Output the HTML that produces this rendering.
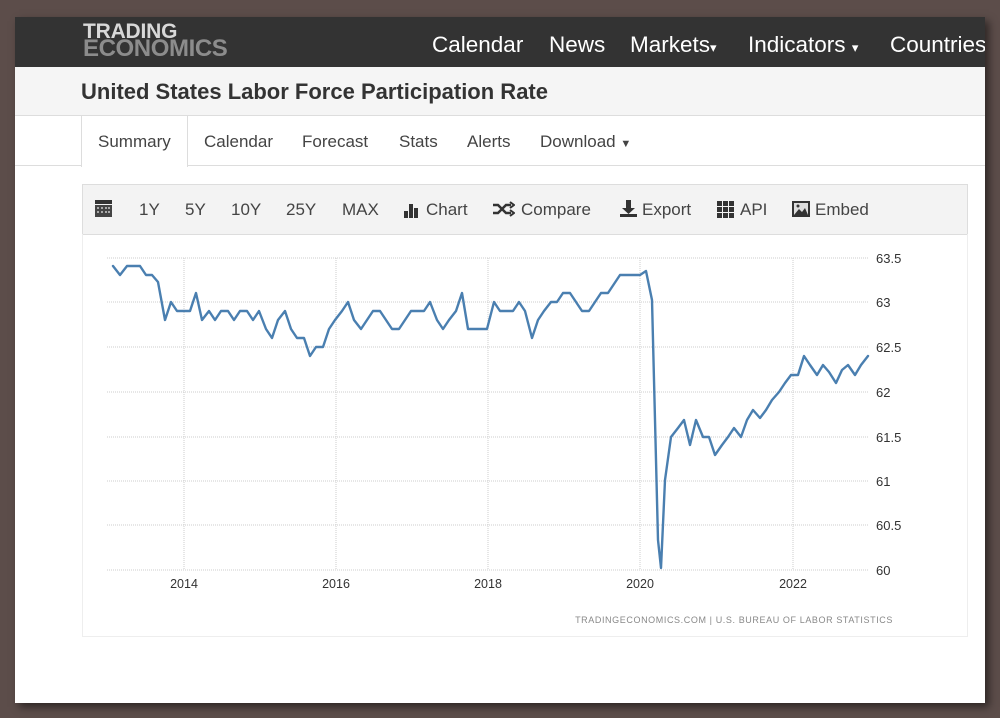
<!DOCTYPE html>
<html><head><meta charset="utf-8"><style>
*{margin:0;padding:0;box-sizing:border-box}
body{width:1000px;height:718px;background:#5c4d4a;position:relative;overflow:hidden;font-family:"Liberation Sans",Arial,sans-serif}
.page{position:absolute;left:15px;top:17px;width:970px;height:686px;background:#fff;overflow:hidden;box-shadow:4px 4px 8px rgba(0,0,0,.5)}
.hdr{position:absolute;left:0;top:0;width:970px;height:50px;background:#333}
.logo{position:absolute;left:68px;top:6px;font-weight:bold;font-size:21px;line-height:17px;letter-spacing:-.2px}
.logo .a{color:#d8d8d8}.logo .b{color:#8c8c8c;font-size:24px;letter-spacing:-.4px}
.nav{position:absolute;top:15px;color:#fff;font-size:22.5px}
.tbar{position:absolute;left:0;top:50px;width:970px;height:49px;background:#f5f5f5;border-bottom:1px solid #ddd}
.tbar h1{position:absolute;left:66px;top:12px;font-size:22px;color:#333;font-weight:bold}
.tabs{position:absolute;left:0;top:99px;width:970px;height:50px;border-bottom:1px solid #ddd}
.tab{position:absolute;top:16px;font-size:17px;color:#444}
.act{position:absolute;left:66px;top:-1px;width:107px;height:52px;background:#fff;border:1px solid #ddd;border-bottom:none}
.tool{position:absolute;left:67px;top:167px;width:886px;height:51px;background:#f3f3f3;border:1px solid #ddd}
.ti{position:absolute;top:15px;font-size:17px;color:#444}
.chart{position:absolute;left:67px;top:217px;width:886px;height:403px;border:1px solid #eee;border-top:none}
</style></head><body>
<div class="page">
<div class="hdr">
<div class="logo"><div class="a">TRADING</div><div class="b">ECONOMICS</div></div>
<div class="nav" style="left:417px">Calendar</div>
<div class="nav" style="left:534px">News</div>
<div class="nav" style="left:615px">Markets<span style="font-size:13px">▾</span></div>
<div class="nav" style="left:733px">Indicators <span style="font-size:13px">▾</span></div>
<div class="nav" style="left:875px">Countries</div>
</div>
<div class="tbar"><h1>United States Labor Force Participation Rate</h1></div>
<div class="tabs">
<div class="act"></div>
<div class="tab" style="left:83px">Summary</div>
<div class="tab" style="left:189px">Calendar</div>
<div class="tab" style="left:287px">Forecast</div>
<div class="tab" style="left:384px">Stats</div>
<div class="tab" style="left:452px">Alerts</div>
<div class="tab" style="left:525px">Download <span style="font-size:11px">▼</span></div>
</div>
<div class="tool">
<svg style="position:absolute;left:12px;top:15px" width="17" height="17"><rect x="0" y="0" width="17" height="4" fill="#333"/><rect x="0" y="5" width="17" height="12" fill="#444"/><g fill="#aaa"><rect x="2" y="7" width="2" height="2"/><rect x="6" y="7" width="2" height="2"/><rect x="10" y="7" width="2" height="2"/><rect x="13" y="7" width="2" height="2"/><rect x="2" y="11" width="2" height="2"/><rect x="6" y="11" width="2" height="2"/><rect x="10" y="11" width="2" height="2"/><rect x="13" y="11" width="2" height="2"/></g></svg>
<div class="ti" style="left:56px">1Y</div>
<div class="ti" style="left:102px">5Y</div>
<div class="ti" style="left:148px">10Y</div>
<div class="ti" style="left:203px">25Y</div>
<div class="ti" style="left:259px">MAX</div>
<svg style="position:absolute;left:321px;top:17px" width="17" height="16"><rect x="0" y="9" width="4" height="7" fill="#333"/><rect x="5" y="2" width="4" height="14" fill="#333"/><rect x="10" y="6" width="4" height="10" fill="#333"/></svg>
<div class="ti" style="left:343px">Chart</div>
<svg style="position:absolute;left:410px;top:16px" width="22" height="16" fill="none" stroke="#333" stroke-width="2.5"><path d="M0 4h5l8 8h5M0 12h5l8-8h5"/><path d="M17 1l4 3-4 3M17 9l4 3-4 3" stroke-width="2"/></svg>
<div class="ti" style="left:438px">Compare</div>
<svg style="position:absolute;left:537px;top:15px" width="17" height="18" fill="#333"><rect x="6" y="0" width="5" height="9"/><path d="M2 8h13l-6.5 6z"/><rect x="0" y="14" width="17" height="3"/></svg>
<div class="ti" style="left:559px">Export</div>
<svg style="position:absolute;left:634px;top:16px" width="17" height="17" fill="#333"><rect x="0" y="0" width="5" height="5"/><rect x="6" y="0" width="5" height="5"/><rect x="12" y="0" width="5" height="5"/><rect x="0" y="6" width="5" height="5"/><rect x="6" y="6" width="5" height="5"/><rect x="12" y="6" width="5" height="5"/><rect x="0" y="12" width="5" height="5"/><rect x="6" y="12" width="5" height="5"/><rect x="12" y="12" width="5" height="5"/></svg>
<div class="ti" style="left:657px">API</div>
<svg style="position:absolute;left:709px;top:16px" width="18" height="16"><rect x="0" y="0" width="18" height="16" fill="#333"/><rect x="2" y="2" width="14" height="12" fill="#ddd"/><path d="M2 14l5-6 3 3 3-4 3 7z" fill="#333"/><circle cx="6" cy="5" r="1.5" fill="#333"/></svg>
<div class="ti" style="left:732px">Embed</div>
</div>
<div class="chart"></div>
</div>
<svg style="position:absolute;left:0;top:0" width="1000" height="718" font-family="Liberation Sans,Arial,sans-serif">
<g stroke="#ccc" stroke-dasharray="1,1" stroke-width="1">
<path d="M107 258H868M107 302H868M107 347H868M107 392H868M107 437H868M107 481H868M107 525H868M107 570H868"/>
<path d="M184 258V570M336 258V570M488 258V570M640 258V570M793 258V570"/>
</g>
<g font-size="13" fill="#333">
<text x="876" y="263">63.5</text><text x="876" y="307">63</text><text x="876" y="352">62.5</text><text x="876" y="397">62</text><text x="876" y="442">61.5</text><text x="876" y="486">61</text><text x="876" y="530">60.5</text><text x="876" y="575">60</text>
<g text-anchor="middle" font-size="12.5"><text x="184" y="588">2014</text><text x="336" y="588">2016</text><text x="488" y="588">2018</text><text x="640" y="588">2020</text><text x="793" y="588">2022</text></g>
</g>
<text x="893" y="623" text-anchor="end" font-size="9" fill="#888" letter-spacing=".6">TRADINGECONOMICS.COM | U.S. BUREAU OF LABOR STATISTICS</text>
<polyline fill="none" stroke="#4a7fb0" stroke-width="2.4" stroke-linejoin="round" stroke-linecap="round" points="113,266 120,275 127,266 133,266 140,266 146,275 152,275 158,282 165,320 171,302 177,311 184,311 190,311 196,293 202,320 209,311 215,320 221,311 228,311 234,320 240,311 247,311 253,320 259,311 266,329 272,338 278,320 285,311 291,329 297,338 304,338 310,356 316,347 323,347 329,329 335,320 342,311 348,302 354,320 361,329 367,320 373,311 380,311 386,320 392,329 399,329 405,320 411,311 418,311 424,311 430,302 437,320 443,329 449,320 456,311 462,293 468,329 475,329 481,329 487,329 494,302 500,311 506,311 513,311 519,302 525,311 532,338 538,320 544,311 551,302 557,302 563,293 570,293 576,302 582,311 589,311 595,302 601,293 608,293 614,284 620,275 627,275 633,275 640,275 646,271 652,300 658,540 661,568 665,480 671,437 678,428 684,420 690,445 696,420 703,437 709,437 715,455 722,445 728,437 734,428 741,437 747,420 753,410 760,418 766,410 772,400 779,392 785,383 791,375 798,375 804,356 810,365 817,375 823,365 829,372 836,383 842,370 848,365 855,375 861,365 868,356"/>
</svg>
</body></html>
